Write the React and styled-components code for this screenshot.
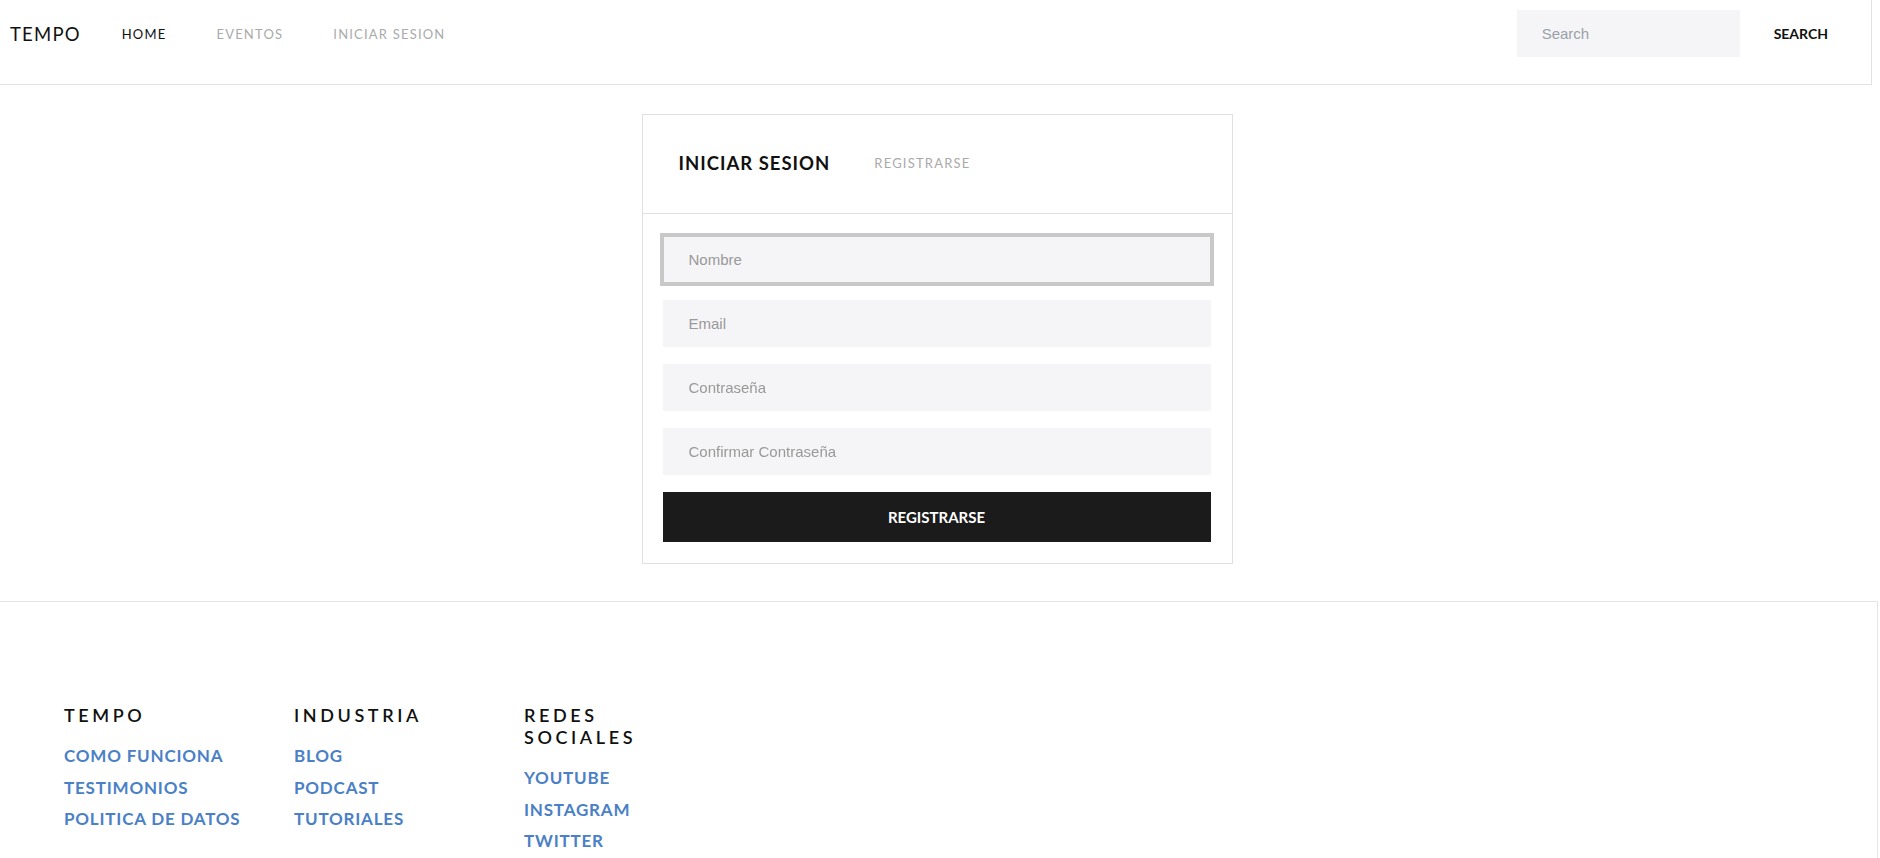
import React from "react";
import styled, { createGlobalStyle } from "styled-components";

const GlobalStyle = createGlobalStyle`
  html, body {
    margin: 0;
    padding: 0;
    background: #fff;
  }
  body {
    font-family: Lato, "Open Sans", Arial, sans-serif;
    color: #111;
  }
  * {
    box-sizing: border-box;
  }
`;

const Header = styled.header`
  display: flex;
  align-items: center;
  width: calc(100% - 8px);
  height: 85px;
  padding: 0 9px 17px 10px;
  border-right: 1px solid #e2e2e2;
  border-bottom: 1px solid #e2e2e2;
`;

const Logo = styled.div`
  font-size: 18.5px;
  letter-spacing: 1.2px;
  color: #111;
  margin-right: 16px;
`;

const Nav = styled.nav`
  display: flex;
  align-items: center;
`;

const NavLink = styled.a`
  padding: 0 25px;
  font-size: 13px;
  letter-spacing: 1.2px;
  text-decoration: none;
  color: ${(p) => (p.$active ? "#111" : "#aaa")};
  cursor: pointer;
`;

const SearchForm = styled.form`
  display: flex;
  align-items: center;
  margin-left: auto;
`;

const SearchInput = styled.input`
  width: 223px;
  height: 47px;
  border: none;
  background: #f5f5f7;
  padding: 0 25px;
  font-family: "Liberation Sans", Arial, sans-serif;
  font-size: 15px;
  color: #333;
  outline: none;
  &::placeholder {
    color: #9aa1a9;
  }
`;

const SearchButton = styled.button`
  border: none;
  background: transparent;
  padding: 0 34px;
  height: 47px;
  font-family: Lato, Arial, sans-serif;
  font-weight: 700;
  font-size: 14px;
  color: #111;
  cursor: pointer;
`;

const Main = styled.main`
  display: flex;
  justify-content: center;
  padding: 29px 0 37px;
`;

const Card = styled.section`
  width: 591px;
  border: 1px solid #e0e0e0;
  margin-right: 6px;
`;

const Tabs = styled.div`
  display: flex;
  align-items: center;
  height: 99px;
  padding: 0 0 2px 36px;
  border-bottom: 1px solid #e0e0e0;
`;

const Tab = styled.a`
  font-size: ${(p) => (p.$active ? "18.5px" : "13px")};
  font-weight: ${(p) => (p.$active ? 700 : 400)};
  letter-spacing: ${(p) => (p.$active ? "1px" : "1.2px")};
  color: ${(p) => (p.$active ? "#111" : "#aaa")};
  margin-right: 44px;
  cursor: pointer;
`;

const Form = styled.form`
  display: flex;
  flex-direction: column;
  gap: 17px;
  padding: 22px 21px 21px 20px;
`;

const Field = styled.input`
  width: 100%;
  height: 47px;
  border: none;
  background: #f5f5f7;
  padding: 0 26px;
  font-family: "Liberation Sans", Arial, sans-serif;
  font-size: 15px;
  color: #333;
  caret-color: #333;
  outline: ${(p) => (p.$focused ? "4px solid #c8c8c8" : "none")};
  outline-offset: -1px;
  &::placeholder {
    color: #999;
  }
`;

const Submit = styled.button`
  height: 50px;
  border: none;
  background: #1b1b1b;
  color: #fff;
  font-family: Lato, Arial, sans-serif;
  font-weight: 700;
  font-size: 15px;
  cursor: pointer;
`;

const Footer = styled.footer`
  display: flex;
  gap: 50px;
  width: calc(100% - 2px);
  padding: 102px 64px 60px;
  border-top: 1px solid #e4e4e4;
  border-right: 1px solid #e4e4e4;
`;

const Column = styled.div`
  width: 180px;
  display: flex;
  flex-direction: column;
  align-items: flex-start;
`;

const ColumnTitle = styled.h4`
  margin: 0 0 14px;
  font-size: 18px;
  line-height: 22px;
  font-weight: 600;
  letter-spacing: 3.6px;
  color: #111;
`;

const FooterLink = styled.a`
  display: block;
  font-size: 17px;
  line-height: 31.5px;
  font-weight: 700;
  letter-spacing: 0.8px;
  color: #4a80c6;
  text-decoration: none;
  cursor: pointer;
`;

const columns = [
  { title: "TEMPO", links: ["COMO FUNCIONA", "TESTIMONIOS", "POLITICA DE DATOS"] },
  { title: "INDUSTRIA", links: ["BLOG", "PODCAST", "TUTORIALES"] },
  { title: "REDES SOCIALES", links: ["YOUTUBE", "INSTAGRAM", "TWITTER"] },
];

const App = () => {
  return (
    <>
      <GlobalStyle />
      <Header>
        <Logo>TEMPO</Logo>
        <Nav>
          <NavLink $active>HOME</NavLink>
          <NavLink>EVENTOS</NavLink>
          <NavLink>INICIAR SESION</NavLink>
        </Nav>
        <SearchForm onSubmit={(e) => e.preventDefault()}>
          <SearchInput type="text" placeholder="Search" />
          <SearchButton type="submit">SEARCH</SearchButton>
        </SearchForm>
      </Header>

      <Main>
        <Card>
          <Tabs>
            <Tab $active>INICIAR SESION</Tab>
            <Tab>REGISTRARSE</Tab>
          </Tabs>
          <Form onSubmit={(e) => e.preventDefault()}>
            <Field type="text" placeholder="Nombre" $focused autoFocus />
            <Field type="email" placeholder="Email" />
            <Field type="password" placeholder="Contraseña" />
            <Field type="password" placeholder="Confirmar Contraseña" />
            <Submit type="submit">REGISTRARSE</Submit>
          </Form>
        </Card>
      </Main>

      <Footer>
        {columns.map((col) => (
          <Column key={col.title}>
            <ColumnTitle>{col.title}</ColumnTitle>
            {col.links.map((l) => (
              <FooterLink key={l}>{l}</FooterLink>
            ))}
          </Column>
        ))}
      </Footer>
    </>
  );
};

export default App;
